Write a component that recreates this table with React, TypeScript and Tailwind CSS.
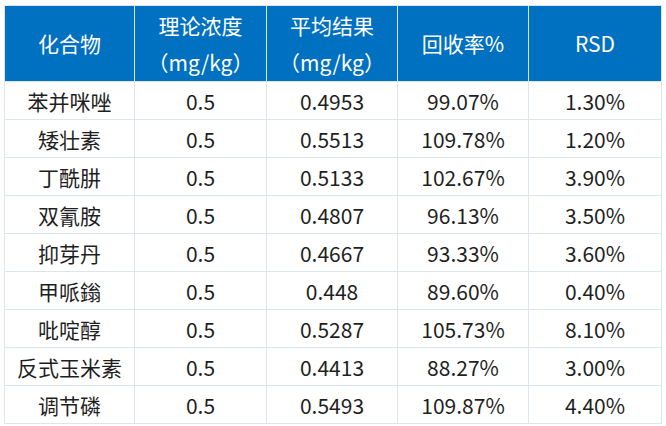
const rows: [string, string, string, string, string][] = [
  ["苯并咪唑", "0.5", "0.4953", "99.07%", "1.30%"],
  ["矮壮素", "0.5", "0.5513", "109.78%", "1.20%"],
  ["丁酰肼", "0.5", "0.5133", "102.67%", "3.90%"],
  ["双氰胺", "0.5", "0.4807", "96.13%", "3.50%"],
  ["抑芽丹", "0.5", "0.4667", "93.33%", "3.60%"],
  ["甲哌鎓", "0.5", "0.448", "89.60%", "0.40%"],
  ["吡啶醇", "0.5", "0.5287", "105.73%", "8.10%"],
  ["反式玉米素", "0.5", "0.4413", "88.27%", "3.00%"],
  ["调节磷", "0.5", "0.5493", "109.87%", "4.40%"],
];

export default function App() {
  return (
    <div
      className="w-[666px] h-[426px] bg-white pl-[4px] pt-[5px]"
      style={{ fontFamily: '"Noto Sans CJK SC", "Noto Sans", sans-serif' }}
    >
      <table className="border-collapse table-fixed w-[657px] text-[21px] text-[#1f1f1f]">
        <colgroup>
          <col className="w-[130px]" />
          <col className="w-[132px]" />
          <col className="w-[131px]" />
          <col className="w-[131px]" />
          <col className="w-[133px]" />
        </colgroup>
        <thead>
          <tr className="bg-[#0070c0] text-white h-[76px]">
            <th className="border border-[#dce4f0] font-normal p-0">化合物</th>
            <th className="border border-[#dce4f0] font-normal leading-[37px] p-0">
              理论浓度
              <br />
              （mg/kg）
            </th>
            <th className="border border-[#dce4f0] font-normal leading-[37px] p-0">
              平均结果
              <br />
              （mg/kg）
            </th>
            <th className="border border-[#dce4f0] font-normal p-0">回收率%</th>
            <th className="border border-[#dce4f0] font-normal p-0">RSD</th>
          </tr>
        </thead>
        <tbody>
          {rows.map((r) => (
            <tr key={r[0]} className="h-[38px]">
              {r.map((c, i) => (
                <td key={i} className="border border-[#dce4f0] text-center p-0 leading-[36px]">
                  {c}
                </td>
              ))}
            </tr>
          ))}
        </tbody>
      </table>
    </div>
  );
}
